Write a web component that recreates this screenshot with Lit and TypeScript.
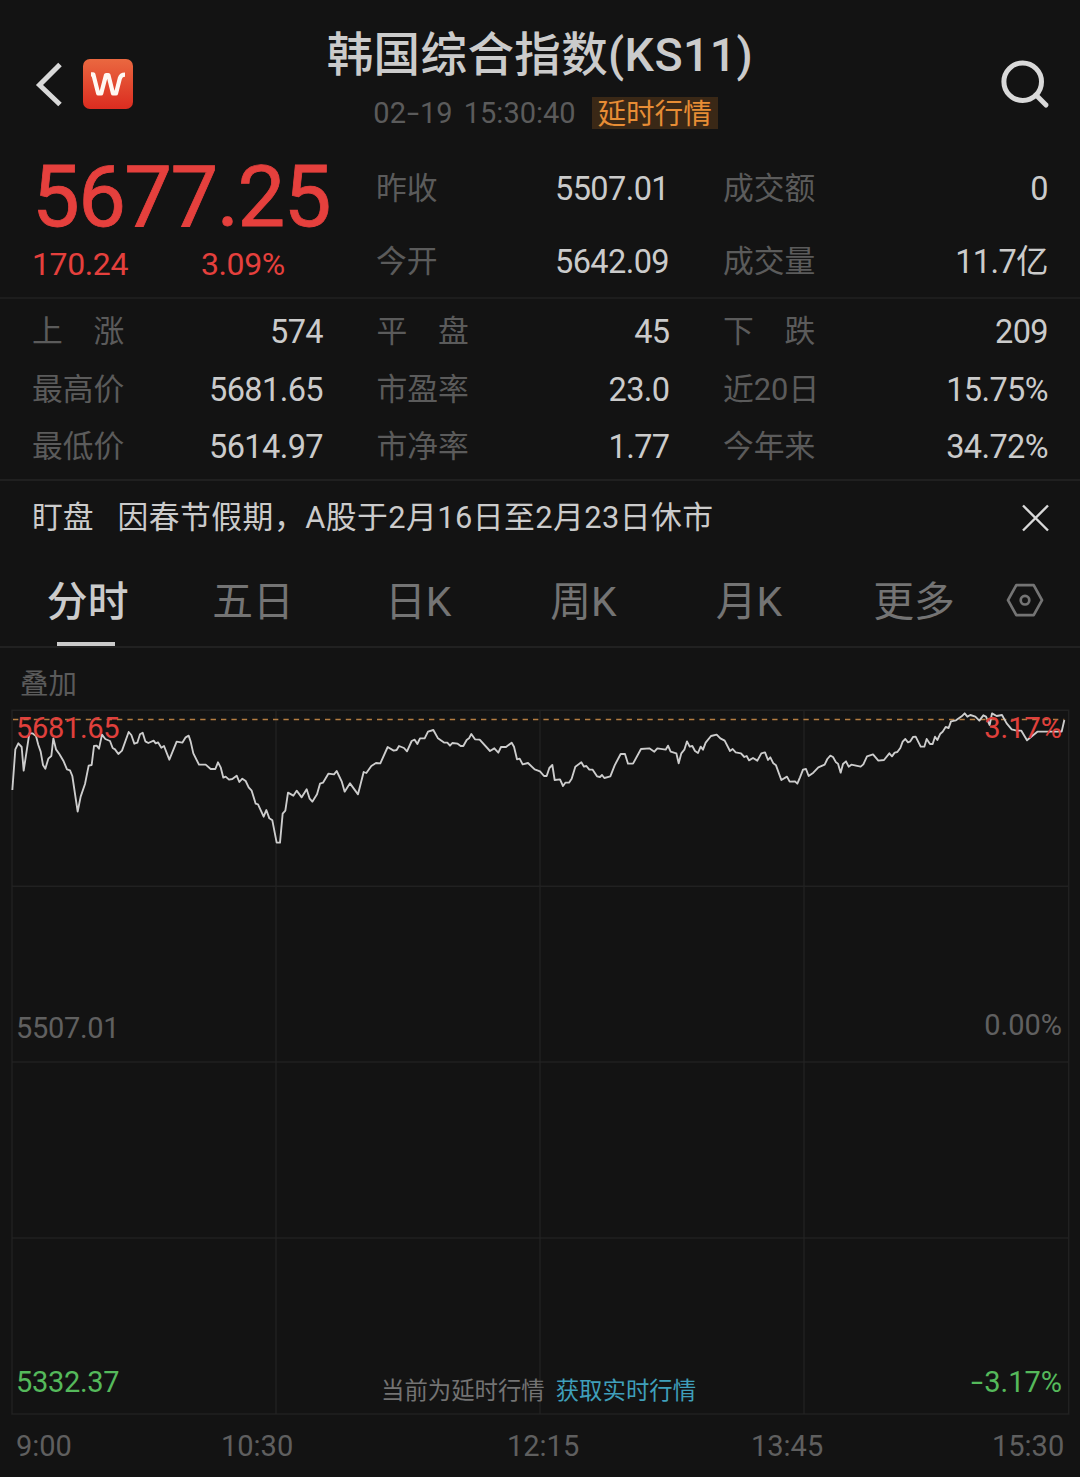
import { LitElement, html, svg, css } from "lit";
import { customElement, property } from "lit/decorators.js";

const FONT = css`Roboto, "Noto Sans CJK SC", sans-serif`;

interface Stat {
  label: string;
  value: string;
}

const SUMMARY: Stat[] = [
  { label: "昨收", value: "5507.01" },
  { label: "成交额", value: "0" },
  { label: "今开", value: "5642.09" },
  { label: "成交量", value: "11.7亿" },
];

const STATS: Stat[] = [
  { label: "上　涨", value: "574" },
  { label: "平　盘", value: "45" },
  { label: "下　跌", value: "209" },
  { label: "最高价", value: "5681.65" },
  { label: "市盈率", value: "23.0" },
  { label: "近20日", value: "15.75%" },
  { label: "最低价", value: "5614.97" },
  { label: "市净率", value: "1.77" },
  { label: "今年来", value: "34.72%" },
];

const TABS = ["分时", "五日", "日K", "周K", "月K", "更多"];

/* Intraday series, in plot units (three units to one pixel). */
const SERIES = `
37,270 46,148 55,130 65,141 71,212 88,100 97,100 108,108 115,135 122,155 129,195 136,206 145,176 154,168
160,115 168,148 178,162 190,182 201,208 210,211 217,228 233,335 242,290 255,252 266,197 275,195 282,138
290,137 297,146 306,104 316,117 330,123 338,144 345,148 355,162 366,152 386,96 394,105 403,131 412,128
420,103 428,98 436,124 445,129 461,122 467,130 474,127 484,143 492,138 508,179 530,125 547,128 557,112
566,107 572,125 580,160 597,194 617,194 632,207 646,207 654,187 662,202 670,233 677,230 687,239 697,237
710,227 718,246 727,236 737,243 746,262 755,272 767,311 774,313 791,350 799,330 808,355 817,361
830,428 840,428 848,341 856,332 864,278 880,287 890,272 905,292 920,268 929,296 937,305 951,283 960,251
969,248 985,221 1002,223 1010,213 1025,244 1034,275 1050,250 1074,283 1091,216 1099,219 1114,198 1128,189
1141,190 1163,141 1181,152 1190,150 1197,138 1212,144 1221,154 1235,123 1244,119 1252,132 1260,115
1274,115 1284,95 1300,90 1314,115 1333,128 1342,128 1350,137 1357,129 1373,131 1382,138 1390,138
1400,120 1407,115 1414,102 1425,118 1439,119 1470,153 1483,145 1495,158 1503,141 1518,141 1535,128
1542,140 1551,178 1559,176 1568,193 1584,189 1604,208 1620,214 1632,228 1640,228 1648,204 1657,195
1664,240 1680,238 1689,258 1696,248 1707,248 1715,236 1726,200 1744,187 1752,200 1759,198 1768,209
1778,209 1791,229 1800,231 1806,225 1813,234 1831,229 1844,196 1862,162 1875,162 1884,191 1899,191
1923,147 1948,145 1963,155 1972,145 1997,149 2004,137 2012,155 2029,160 2036,190 2044,160 2053,149
2061,124 2069,140 2077,138 2085,153 2094,159 2102,140 2109,149 2117,128 2133,108 2150,104 2161,115
2174,122 2190,153 2198,147 2207,157 2223,160 2233,171 2240,168 2247,181 2259,174 2272,182 2284,160
2295,157 2304,180 2311,172 2320,190 2328,196 2344,240 2361,230 2369,245 2385,244 2392,251 2400,232
2409,209 2418,207 2426,228 2440,218 2455,202 2474,194 2482,177 2491,167 2499,171 2508,187 2514,191
2522,218 2529,192 2538,184 2546,200 2554,194 2582,200 2590,193 2601,169 2619,163 2635,182 2652,180
2668,160 2676,169 2684,158 2692,156 2701,144 2708,125 2716,117 2724,127 2731,124 2739,111 2747,110
2762,140 2773,140 2780,117 2790,132 2798,132 2805,110 2812,120 2821,101 2828,95 2837,81 2846,84 2853,64
2868,61 2885,49 2894,40 2902,50 2911,45 2926,50 2938,62 2950,46 2958,50 2969,75 2976,40 2990,48 3006,45
3020,70 3035,88 3050,92 3064,92 3081,121 3112,95 3185,95 3193,60`;

@customElement("stat-cell")
class StatCell extends LitElement {
  @property() label = "";
  @property() value = "";

  static styles = css`
    :host {
      display: flex;
      justify-content: space-between;
      align-items: center;
      font-family: ${FONT};
      line-height: 40px;
      white-space: pre;
    }
    .label {
      padding-top: 3px;
      color: #5b5b5b;
      font-size: 30.8px;
    }
    .value {
      padding-top: 3px;
      color: #cbcbcb;
      font-size: 32.5px;
      letter-spacing: -0.6px;
    }
  `;

  render() {
    return html`<span class="label">${this.label}</span><span class="value">${this.value}</span>`;
  }
}

@customElement("intraday-chart")
class IntradayChart extends LitElement {
  static styles = css`
    :host {
      display: block;
      position: relative;
      height: 716px;
      font-family: ${FONT};
      font-size: 29px;
      line-height: 36px;
    }
    svg {
      display: block;
      width: 1080px;
      height: 716px;
    }
    .grid {
      stroke: #212121;
      stroke-width: 4.5;
      fill: none;
    }
    .limit {
      stroke: #b47d42;
      stroke-width: 5;
      stroke-dasharray: 16 15.2;
    }
    .price {
      stroke: #cdcdcd;
      stroke-width: 5.6;
      stroke-linejoin: round;
      fill: none;
    }
    .tag {
      position: absolute;
    }
    .left {
      left: 16px;
      letter-spacing: -0.3px;
    }
    .right {
      right: 18px;
    }
    .top {
      top: 10px;
      color: #e0403c;
    }
    .mid {
      top: 310px;
      color: #606060;
    }
    .right.mid {
      top: 307px;
    }
    .bottom {
      top: 664px;
      color: #55b95b;
    }
    .dash {
      display: inline-block;
      transform: scaleX(1.5);
      margin-right: 3px;
    }
    .tip {
      left: 381px;
      top: 673px;
      display: flex;
      gap: 11px;
      font-size: 23.4px;
      color: #737373;
    }
    .link {
      color: #3f9fba;
    }
  `;

  render() {
    return html`
      <svg viewBox="0 0 3240 2148">
        <path class="grid" d="M36 31H3206V2142H36ZM36 559H3206M36 1086H3206M36 1614H3206M828 31V2142M1620 31V2142M2412 31V2142" />
        <path class="limit" d="M39 58.5H3193" />
        ${svg`<polyline class="price" points=${SERIES} />`}
      </svg>
      <span class="tag left top">5681.65</span>
      <span class="tag right top">3.17%</span>
      <span class="tag left mid">5507.01</span>
      <span class="tag right mid">0.00%</span>
      <span class="tag left bottom">5332.37</span>
      <span class="tag right bottom"><span class="dash">-</span>3.17%</span>
      <div class="tag tip"><span>当前为延时行情</span><span class="link">获取实时行情</span></div>
    `;
  }
}

@customElement("app-root")
class AppRoot extends LitElement {
  static styles = css`
    :host {
      display: block;
      width: 1080px;
      height: 1477px;
      overflow: hidden;
      background: #131313;
      color: #cbcbcb;
      font-family: ${FONT};
    }
    svg {
      display: block;
    }
    .header {
      display: grid;
      grid-template-columns: 200px 1fr 200px;
      height: 151px;
    }
    .nav {
      display: flex;
      gap: 20px;
      padding: 59px 0 0 35px;
      height: 50px;
    }
    .heading {
      display: flex;
      flex-direction: column;
      align-items: center;
      padding-top: 25px;
    }
    .title {
      height: 60px;
      line-height: 60px;
      font-size: 46.5px;
      font-weight: 500;
      letter-spacing: 0.4px;
      white-space: nowrap;
    }
    .subtitle {
      display: flex;
      align-items: center;
      gap: 16px;
      margin: 12px 0 0 11px;
      height: 32px;
      font-size: 29px;
      line-height: 34px;
      color: #5b5b5b;
      white-space: pre;
    }
    .stamp {
      word-spacing: 4px;
    }
    .dash {
      display: inline-block;
      transform: scaleX(1.5);
      margin: 0 3px;
    }
    .badge {
      width: 126px;
      height: 32px;
      text-align: center;
      font-size: 28.6px;
      color: #e78d35;
      background: #3a2816;
    }
    .search {
      justify-self: end;
      padding: 59px 30px 0 0;
    }
    .quote {
      display: grid;
      grid-template-columns: 376px 1fr;
      height: 146px;
      border-bottom: 2px solid #1d1d1d;
    }
    .last {
      padding: 0 0 0 32px;
      color: #e5403d;
    }
    .price {
      height: 90px;
      line-height: 93px;
      font-size: 85px;
      -webkit-text-stroke: 0.8px currentColor;
      letter-spacing: -1.6px;
    }
    .change {
      display: grid;
      grid-template-columns: 169px 1fr;
      line-height: 46px;
      font-size: 32px;
      letter-spacing: -0.4px;
    }
    .summary {
      display: grid;
      grid-template-columns: 293px 325px;
      column-gap: 54px;
      grid-auto-rows: 73px;
    }
    .stats {
      display: grid;
      grid-template-columns: 291px 293px 325px;
      column-gap: 53.5px;
      grid-auto-rows: 57.5px;
      padding: 3px 32px 4px;
      height: 172.5px;
      border-bottom: 2px solid #202020;
    }
    .notice {
      display: flex;
      align-items: center;
      height: 74px;
      padding: 0 31px 0 32px;
      font-size: 30.8px;
      line-height: 40px;
    }
    .message {
      flex: 1;
      margin-left: 24px;
      letter-spacing: 0.46px;
    }
    .tabs {
      display: flex;
      height: 91px;
      padding-left: 5px;
      border-bottom: 2px solid #212121;
    }
    .tab {
      display: flex;
      flex-direction: column;
      align-items: center;
      justify-content: space-between;
      width: 165.3px;
      font-size: 40.8px;
      line-height: 94px;
      color: #747474;
    }
    .tab.active {
      color: #cbcbcb;
      font-weight: 500;
    }
    .bar {
      width: 58px;
      height: 4px;
      margin: -7px 3px 0 0;
      background: #cbcbcb;
    }
    .settings {
      margin: 27px 0 0 9px;
    }
    .overlay {
      height: 52px;
      padding-left: 20px;
      line-height: 73px;
      font-size: 28.5px;
      color: #5b5b5b;
    }
    .times {
      display: grid;
      grid-template-columns: 205px 286px 244px 241px 1fr;
      padding-left: 16px;
      line-height: 60px;
      font-size: 29px;
      color: #5f5f5f;
    }
  `;

  render() {
    return html`
      <div class="header">
        <div class="nav">
          <svg width="28" height="50" viewBox="0 0 28 50">
            <path d="M25 5.5 4.5 26 25 45.5" fill="none" stroke="#d9d9d9" stroke-width="5" />
          </svg>
          <svg width="50" height="50" viewBox="0 0 50 50">
            <defs>
              <linearGradient id="g" x1="0" y1="0" x2="0" y2="1">
                <stop offset="0" stop-color="#ea6840" />
                <stop offset="1" stop-color="#db2c20" />
              </linearGradient>
            </defs>
            <rect width="50" height="50" rx="7" fill="url(#g)" />
            <path
              d="M8 15.3H10.3L15.2 34.5H18.2L23 16H25.4L30 34.5H33L36.8 19.4Q37.9 15.6 42 15.6"
              fill="none" stroke="#fff8f2" stroke-width="4.2" stroke-linejoin="round" />
          </svg>
        </div>
        <div class="heading">
          <div class="title">韩国综合指数(KS11)</div>
          <div class="subtitle">
            <span class="stamp">02<span class="dash">-</span>19 15:30:40</span>
            <span class="badge">延时行情</span>
          </div>
        </div>
        <div class="search">
          <svg width="50" height="50" viewBox="0 0 50 50" fill="none" stroke="#d9d9d9" stroke-width="5">
            <circle cx="22.7" cy="22.7" r="18.8" />
            <path d="M36 36 46 46" stroke-linecap="round" />
          </svg>
        </div>
      </div>

      <div class="quote">
        <div class="last">
          <div class="price">5677.25</div>
          <div class="change"><span>170.24</span><span>3.09%</span></div>
        </div>
        <div class="summary">
          ${SUMMARY.map((s) => html`<stat-cell .label=${s.label} .value=${s.value}></stat-cell>`)}
        </div>
      </div>

      <div class="stats">
        ${STATS.map((s) => html`<stat-cell .label=${s.label} .value=${s.value}></stat-cell>`)}
      </div>

      <div class="notice">
        <span>盯盘</span>
        <span class="message">因春节假期，A股于2月16日至2月23日休市</span>
        <svg width="27" height="28" viewBox="0 0 27 28">
          <path d="M1 1.5 26 26.5M26 1.5 1 26.5" fill="none" stroke="#d9d9d9" stroke-width="2.4" />
        </svg>
      </div>

      <div class="tabs">
        ${TABS.map(
          (t, i) => html`<div class="tab ${i === 0 ? "active" : ""}">
            <span>${t}</span>${i === 0 ? html`<span class="bar"></span>` : ""}
          </div>`
        )}
        <svg class="settings" width="38" height="36" viewBox="0 0 38 36" fill="none" stroke="#747474" stroke-width="2.7">
          <path d="M10.3 3.2H27.7L36 18.2 27.7 33.2H10.3L2 18.2Z" stroke-linejoin="round" />
          <circle cx="19" cy="18.2" r="4.3" />
        </svg>
      </div>

      <div class="overlay">叠加</div>
      <intraday-chart></intraday-chart>
      <div class="times">
        <span>9:00</span><span>10:30</span><span>12:15</span><span>13:45</span><span>15:30</span>
      </div>
    `;
  }
}
